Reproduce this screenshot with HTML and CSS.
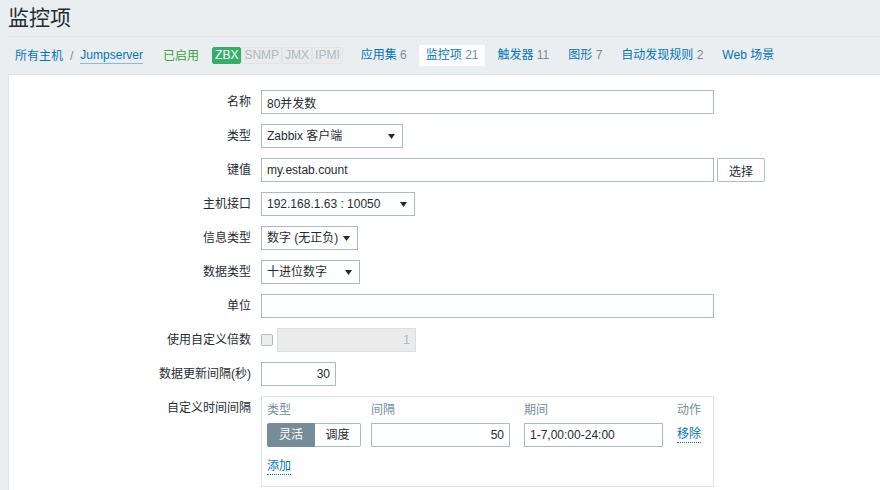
FILE: index.html
```html
<!DOCTYPE html>
<html lang="zh-CN">
<head>
<meta charset="utf-8">
<title>监控项</title>
<link rel="stylesheet" href="styles.css">
</head>
<body>
<div class="page">
  <header class="title-bar"><h1>监控项</h1></header>
  <nav class="nav">
    <div class="crumbs">
      <a class="link">所有主机</a><span class="sep">/</span><a class="link current">Jumpserver</a>
    </div>
    <span class="enabled">已启用</span>
    <div class="statuses">
      <span class="st st-green">ZBX</span><span class="st">SNMP</span><span class="st">JMX</span><span class="st">IPMI</span>
    </div>
    <ul class="tabs">
      <li><a class="link">应用集 <span class="cnt">6</span></a></li>
      <li class="active"><a class="link">监控项 <span class="cnt">21</span></a></li>
      <li><a class="link">触发器 <span class="cnt">11</span></a></li>
      <li><a class="link">图形 <span class="cnt">7</span></a></li>
      <li><a class="link">自动发现规则 <span class="cnt">2</span></a></li>
      <li><a class="link">Web 场景</a></li>
    </ul>
  </nav>
  <main class="panel">
    <div class="form">
      <div class="row"><label>名称</label><div class="field"><input class="txt w-wide" type="text" value="80并发数"></div></div>
      <div class="row"><label>类型</label><div class="field"><div class="select w-type"><span>Zabbix 客户端</span><svg class="arrow" width="7" height="5" viewBox="0 0 7 5"><path d="M0 0H7L3.5 5Z" fill="#1f2c33"/></svg></div></div></div>
      <div class="row"><label>键值</label><div class="field"><input class="txt w-wide" type="text" value="my.estab.count"><button class="btn" type="button">选择</button></div></div>
      <div class="row"><label>主机接口</label><div class="field"><div class="select w-iface"><span>192.168.1.63 : 10050</span><svg class="arrow" width="7" height="5" viewBox="0 0 7 5"><path d="M0 0H7L3.5 5Z" fill="#1f2c33"/></svg></div></div></div>
      <div class="row"><label>信息类型</label><div class="field"><div class="select w-info"><span>数字 (无正负)</span><svg class="arrow" width="7" height="5" viewBox="0 0 7 5"><path d="M0 0H7L3.5 5Z" fill="#1f2c33"/></svg></div></div></div>
      <div class="row"><label>数据类型</label><div class="field"><div class="select w-data"><span>十进位数字</span><svg class="arrow" width="7" height="5" viewBox="0 0 7 5"><path d="M0 0H7L3.5 5Z" fill="#1f2c33"/></svg></div></div></div>
      <div class="row"><label>单位</label><div class="field"><input class="txt w-wide" type="text" value=""></div></div>
      <div class="row"><label>使用自定义倍数</label><div class="field"><span class="checkbox"></span><input class="txt num disabled w-mult" type="text" value="1" disabled></div></div>
      <div class="row"><label>数据更新间隔(秒)</label><div class="field"><input class="txt num w-delay" type="text" value="30"></div></div>
      <div class="row"><label>自定义时间间隔</label>
        <div class="field">
          <div class="intervals">
            <div class="int-grid">
              <div class="int-head">类型</div>
              <div class="int-head">间隔</div>
              <div class="int-head">期间</div>
              <div class="int-head">动作</div>
              <div class="seg"><span class="seg-item on">灵活</span><span class="seg-item">调度</span></div>
              <div><input class="txt num w-int" type="text" value="50"></div>
              <div><input class="txt w-int" type="text" value="1-7,00:00-24:00"></div>
              <div class="act"><a class="dlink">移除</a></div>
            </div>
            <div class="add-row"><a class="dlink">添加</a></div>
          </div>
        </div>
      </div>
    </div>
  </main>
</div>
</body>
</html>
```

FILE: styles.css
```css
html, body {
  margin: 0;
  padding: 0;
  overflow: hidden;
}
body {
  background: #ebeef0;
  color: #1f2c33;
  font-family: "Liberation Sans", Arial, "Noto Sans CJK SC", sans-serif;
  font-size: 12px;
  line-height: 14px;
}
.page {
  padding-left: 8px;
}
.title-bar {
  height: 36px;
  border-bottom: 1px solid #dfe4e7;
  display: flex;
  align-items: center;
}
.title-bar h1 {
  margin: 0;
  font-size: 21px;
  font-weight: normal;
  line-height: 24px;
  color: #1f2c33;
}
.nav {
  height: 37px;
  display: flex;
  align-items: center;
}
.link {
  color: #0275b8;
  text-decoration: none;
}
.crumbs {
  padding-left: 7px;
  display: flex;
  align-items: center;
}
.sep {
  color: #768d99;
  margin: 0 7px;
}
.current {
  border-bottom: 1px solid #8ab9dc;
  padding-bottom: 1px;
}
.enabled {
  color: #429e47;
  margin-left: 20px;
}
.statuses {
  display: flex;
  margin-left: 13px;
  margin-right: 11px;
}
.st {
  display: inline-block;
  padding: 0 2px;
  line-height: 15px;
  border: 1px solid #dfe4e7;
  background: #ebebeb;
  color: #acbbc2;
  border-radius: 2px;
}
.st-green {
  background: #34af67;
  border-color: #34af67;
  color: #ffffff;
}
.tabs {
  list-style: none;
  margin: 0;
  padding: 0;
  display: flex;
  gap: 5px;
}
.tabs li {
  padding: 3px 7px 4px;
  border-radius: 2px;
}
.tabs li.active {
  background: #ffffff;
}
.cnt {
  color: #768d99;
}
.panel {
  background: #ffffff;
  border-top: 1px solid #dfe4e7;
  border-left: 1px solid #dfe4e7;
  padding-top: 15px;
  height: 420px;
}
.row {
  display: grid;
  grid-template-columns: 242px 1fr;
  column-gap: 10px;
  margin-bottom: 10px;
}
.row label {
  text-align: right;
  line-height: 24px;
  white-space: nowrap;
}
.field {
  display: flex;
  align-items: center;
}
.txt {
  box-sizing: border-box;
  height: 24px;
  border: 1px solid #acbbc2;
  padding: 0 5px;
  margin: 0;
  font-family: inherit;
  font-size: 12px;
  color: #1f2c33;
  background: #ffffff;
  outline: none;
}
.num {
  text-align: right;
}
.disabled {
  background: #ebebeb;
  border-color: #dadfe2;
  color: #acbbc2;
}
.w-wide { width: 453px; }
.w-mult { width: 139px; }
.w-delay { width: 75px; }
.w-int { width: 139px; }
.select {
  box-sizing: border-box;
  height: 24px;
  border: 1px solid #acbbc2;
  padding: 0 7px 0 5px;
  display: flex;
  align-items: center;
  justify-content: space-between;
  background: #ffffff;
}
.w-type { width: 142px; }
.w-iface { width: 154px; }
.w-info { width: 97px; }
.w-data { width: 99px; }
.arrow {
  display: block;
  flex: none;
}
.btn {
  box-sizing: border-box;
  height: 24px;
  width: 48px;
  margin-left: 3px;
  border: 1px solid #acbbc2;
  border-radius: 2px;
  background: #ffffff;
  color: #1f2c33;
  font-family: inherit;
  font-size: 12px;
  padding: 0;
}
.checkbox {
  box-sizing: border-box;
  width: 12px;
  height: 12px;
  border: 1px solid #acbbc2;
  border-radius: 2px;
  background: #ebeef0;
  margin-right: 4px;
}
.intervals {
  box-sizing: border-box;
  width: 453px;
  border: 1px solid #dfe4e7;
  padding: 5px 5px 11px 5px;
}
.int-grid {
  display: grid;
  grid-template-columns: 104px 153px 153px auto;
  row-gap: 5px;
}
.int-head {
  color: #768d99;
  line-height: 16px;
}
.seg {
  display: flex;
  width: 94px;
}
.seg-item {
  box-sizing: border-box;
  height: 24px;
  line-height: 22px;
  text-align: center;
  border: 1px solid #acbbc2;
  background: #ffffff;
  color: #1f2c33;
  width: 46px;
}
.seg-item.on {
  width: 48px;
  background: #768d99;
  border-color: #768d99;
  color: #ffffff;
  border-radius: 2px 0 0 2px;
}
.seg-item:last-child {
  border-left: none;
  border-radius: 0 2px 2px 0;
}
.act {
  display: flex;
  align-items: center;
}
.dlink {
  display: inline-block;
  color: #0275b8;
  line-height: 15px;
  border-bottom: 1px dotted #0275b8;
}
.add-row {
  margin-top: 11px;
  line-height: 16px;
}
```
